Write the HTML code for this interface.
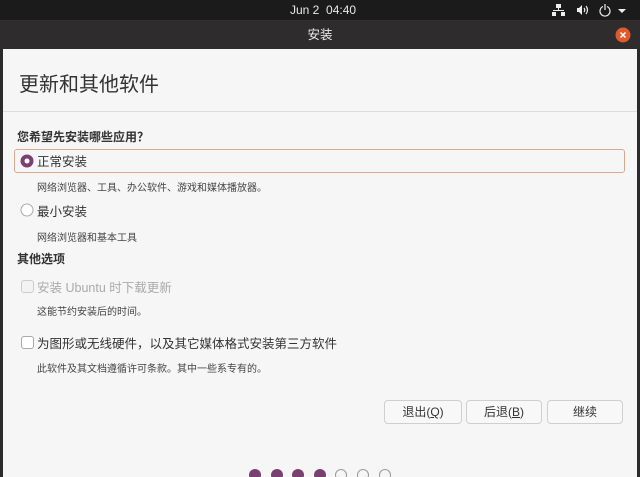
<!DOCTYPE html>
<html><head><meta charset="utf-8"><style>
*{margin:0;padding:0;box-sizing:border-box}
html,body{width:640px;height:477px;overflow:hidden}
body{background:#2b2b2b;font-family:"Liberation Sans","Noto Sans CJK SC",sans-serif;position:relative}
.top{position:absolute;left:0;top:0;width:640px;height:20px;background:#1b1b1b;color:#e8e8e8;font-size:12px}
.title{position:absolute;left:0;top:20px;width:640px;height:29px;background:#2e2c2c;border-top:1px solid #3a2f2f;color:#eee;font-size:12.5px;text-align:center;line-height:28px}
.win{position:absolute;left:3px;top:49px;width:634px;height:428px;background:#f6f6f6}
.abs{position:absolute;white-space:nowrap}
h1{position:absolute;left:16px;top:19px;font-size:20px;font-weight:normal;color:#333}
.sep{position:absolute;left:0;top:62px;width:634px;height:1px;background:#ddd}
.b{font-weight:bold;font-size:12px;color:#333}
.l{font-size:12.5px;color:#333}
.s{font-size:10px;color:#444}
.btn{position:absolute;top:351px;height:24px;border:1px solid #cfcfcf;border-radius:4px;background:#f8f8f8;font-size:12px;color:#333;text-align:center;line-height:22px}
.dot{position:absolute;top:420px;width:12px;height:12px;border-radius:50%}
.f{background:#7a4170}.o{border:1px solid #999;background:#f6f6f6}
.cb{position:absolute;width:13px;height:13px;border:1px solid #aaa;border-radius:3px;background:#fff}
</style></head><body>
<div class="top"><div class="abs" style="left:290px;top:3px">Jun 2&nbsp; 04:40</div>
<svg class="abs" style="left:552px;top:3px" width="85" height="14"><g fill="#eee"><rect x="4" y="1" width="5" height="4"/><rect x="6" y="5" width="1" height="3"/><rect x="1" y="7" width="11" height="1"/><rect x="0" y="9" width="4" height="4"/><rect x="9" y="9" width="4" height="4"/><path d="M25 5h2l3-3v10l-3-3h-2z"/><path d="M66 6l4 4 4-4z"/></g><g fill="none" stroke="#eee" stroke-width="1.2"><path d="M32 5q1.5 2 0 4M34 3q3 4 0 8"/><path d="M51 3.5a5 5 0 1 0 4 0M53 1v6"/></g></svg></div>
<div class="title">安装
<svg class="abs" style="left:615px;top:6px" width="16" height="16"><circle cx="8" cy="8" r="7.5" fill="#e05a2b"/><path d="M5.5 5.5l5 5M10.5 5.5l-5 5" stroke="#fff" stroke-width="1.5"/></svg></div>
<div class="win">
<h1>更新和其他软件</h1><div class="sep"></div>
<div class="abs b" style="left:14px;top:79px">您希望先安装哪些应用？</div>
<div class="abs" style="left:11px;top:100px;width:611px;height:24px;border:1px solid #d9a894;border-radius:3px"></div>
<svg class="abs" style="left:17px;top:105px" width="14" height="14"><circle cx="7" cy="7" r="6.5" fill="#7a4170"/><circle cx="7" cy="7" r="2.5" fill="#fff"/></svg>
<div class="abs l" style="left:34px;top:102px">正常安装</div>
<div class="abs s" style="left:34px;top:130px">网络浏览器、工具、办公软件、游戏和媒体播放器。</div>
<svg class="abs" style="left:17px;top:154px" width="14" height="14"><circle cx="7" cy="7" r="6" fill="#fff" stroke="#aaa"/></svg>
<div class="abs l" style="left:34px;top:152px">最小安装</div>
<div class="abs s" style="left:34px;top:180px">网络浏览器和基本工具</div>
<div class="abs b" style="left:14px;top:201px">其他选项</div>
<div class="cb" style="left:18px;top:231px;border-color:#ccc;background:#f3f3f3"></div>
<div class="abs l" style="left:34px;top:228px;color:#aaa">安装 Ubuntu 时下载更新</div>
<div class="abs s" style="left:34px;top:254px">这能节约安装后的时间。</div>
<div class="cb" style="left:18px;top:287px"></div>
<div class="abs l" style="left:34px;top:284px">为图形或无线硬件，以及其它媒体格式安装第三方软件</div>
<div class="abs s" style="left:34px;top:311px">此软件及其文档遵循许可条款。其中一些系专有的。</div>
<div class="btn" style="left:381px;width:78px">退出(<u>Q</u>)</div>
<div class="btn" style="left:463px;width:76px">后退(<u>B</u>)</div>
<div class="btn" style="left:544px;width:76px">继续</div>
<div class="dot f" style="left:246px"></div><div class="dot f" style="left:268px"></div><div class="dot f" style="left:289px"></div><div class="dot f" style="left:311px"></div>
<div class="dot o" style="left:332px"></div><div class="dot o" style="left:354px"></div><div class="dot o" style="left:376px"></div>
</div>
</body></html>
